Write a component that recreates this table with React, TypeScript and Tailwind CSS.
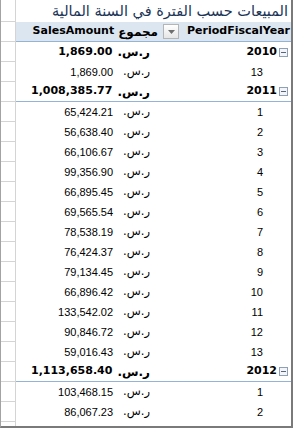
import React from "react";

type Row = { kind: "year" | "month"; label: string; value: string; line?: boolean };

const rows: Row[] = [
  { kind: "year", label: "2010", value: "1,869.00" },
  { kind: "month", label: "13", value: "1,869.00" },
  { kind: "year", label: "2011", value: "1,008,385.77", line: true },
  { kind: "month", label: "1", value: "65,424.21" },
  { kind: "month", label: "2", value: "56,638.40" },
  { kind: "month", label: "3", value: "66,106.67" },
  { kind: "month", label: "4", value: "99,356.90" },
  { kind: "month", label: "5", value: "66,895.45" },
  { kind: "month", label: "6", value: "69,565.54" },
  { kind: "month", label: "7", value: "78,538.19" },
  { kind: "month", label: "8", value: "76,424.37" },
  { kind: "month", label: "9", value: "79,134.45" },
  { kind: "month", label: "10", value: "66,896.42" },
  { kind: "month", label: "11", value: "133,542.02" },
  { kind: "month", label: "12", value: "90,846.72" },
  { kind: "month", label: "13", value: "59,016.43" },
  { kind: "year", label: "2012", value: "1,113,658.40", line: true },
  { kind: "month", label: "1", value: "103,468.15" },
  { kind: "month", label: "2", value: "86,067.23" },
];

function Collapse() {
  return (
    <div className="w-[9px] h-[9px] border border-[#8f9fb5] bg-[#f3f5f8] flex items-center justify-center">
      <div className="w-[5px] h-px bg-[#56677d]" />
    </div>
  );
}

function Strip({ last }: { last?: boolean }) {
  return (
    <div
      className={
        "w-[15px] shrink-0 border-r border-[#d4d4d4] " + (last ? "" : "border-b")
      }
    />
  );
}

export default function App() {
  return (
    <div className="w-[293px] h-[428px] bg-white border-l border-l-[#a3a3a3] border-r-2 border-b-2 border-r-[#7a7a7a] border-b-[#7a7a7a] flex flex-col overflow-hidden">
      {/* title row */}
      <div className="h-[22px] flex shrink-0">
        <Strip />
        <div
          dir="rtl"
          className="flex-1 flex items-center pr-[3px] pt-[1px] text-[14.5px] leading-none text-[#1c3557] font-['DejaVu_Sans',sans-serif] whitespace-nowrap"
        >
          المبيعات حسب الفترة في السنة المالية
        </div>
      </div>
      {/* header row */}
      <div className="h-[20px] flex shrink-0">
        <Strip />
        <div className="flex-1 flex bg-[#dce6f1] border-b border-[#95b3d7] font-['DejaVu_Sans',sans-serif] font-bold text-[11px] text-black whitespace-nowrap">
          <div className="w-[145px] flex items-center justify-end pr-[3px]">
            <span>SalesAmount</span>
            <span dir="rtl" className="ml-[4px] text-[12px] tracking-[2px]">
              مجموع
            </span>
          </div>
          <div className="flex-1 flex items-center justify-between pl-[2px] pr-[1px]">
            <div className="w-[16px] h-[15px] border border-[#b5b5b5] bg-gradient-to-b from-white to-[#e6e6e6] flex items-center justify-center">
              <svg width="7" height="4" viewBox="0 0 7 4">
                <path d="M0 0 L7 0 L3.5 4 Z" fill="#6e6e6e" />
              </svg>
            </div>
            <span>PeriodFiscalYear</span>
          </div>
        </div>
      </div>
      {/* data rows */}
      {rows.map((r, i) => {
        const bold = r.kind === "year";
        return (
          <div key={i} className="h-[20px] flex shrink-0">
            <Strip />
            <div
              className={
                "flex-1 flex text-black whitespace-nowrap " +
                (r.line ? "border-b border-[#95b3d7] " : "") +
                (bold
                  ? "font-['DejaVu_Sans',sans-serif] font-bold text-[11px]"
                  : "font-['Liberation_Sans','DejaVu_Sans',sans-serif] text-[11px]")
              }
            >
              <div className="w-[145px] flex items-center justify-end pr-[11px]">
                <span>{r.value}</span>
                <span
                  dir="rtl"
                  className={
                    "font-['DejaVu_Sans',sans-serif] " +
                    (bold
                      ? "ml-[5px] text-[12px] tracking-[1.5px]"
                      : "ml-[10px] text-[11.5px] tracking-[2px]")
                  }
                >
                  ر.س.
                </span>
              </div>
              <div
                className={
                  "flex-1 flex items-center justify-end " +
                  (bold ? "pr-[3px]" : "pr-[28px]")
                }
              >
                <span>{r.label}</span>
                {bold && (
                  <div className="ml-[2px]">
                    <Collapse />
                  </div>
                )}
              </div>
            </div>
          </div>
        );
      })}
      <div className="flex-1 flex">
        <Strip last />
      </div>
    </div>
  );
}
